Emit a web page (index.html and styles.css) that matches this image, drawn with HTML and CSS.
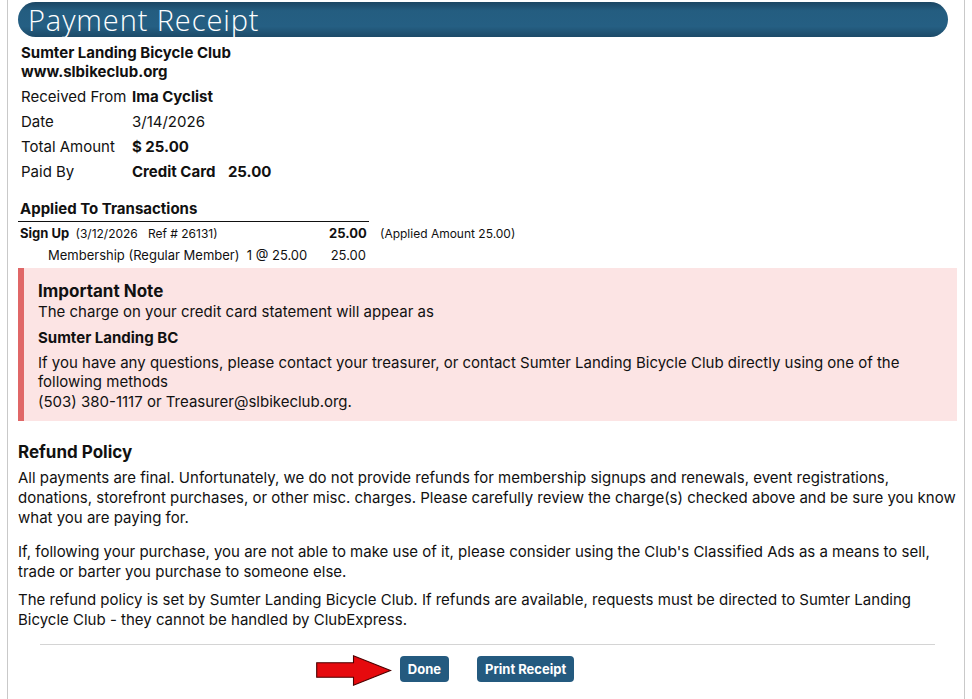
FILE: index.html
```html
<!DOCTYPE html>
<html>
<head>
<meta charset="utf-8">
<link rel="stylesheet" href="styles.css">
</head>
<body>
<div class="page">
  <div class="title-bar"><h1 class="title">Payment Receipt</h1></div>
  <div class="club">
    <div>Sumter Landing Bicycle Club</div>
    <div>www.slbikeclub.org</div>
  </div>
  <table class="info">
    <tr><td class="lbl">Received From</td><td class="b">Ima Cyclist</td></tr>
    <tr><td class="lbl">Date</td><td>3/14/2026</td></tr>
    <tr><td class="lbl">Total Amount</td><td class="b">$ 25.00</td></tr>
    <tr><td class="lbl">Paid By</td><td class="b">Credit Card <span class="amt">25.00</span></td></tr>
  </table>
  <div class="applied">
    <div class="applied-head">Applied To Transactions</div>
    <div class="trx-row">
      <div class="trx-main"><b>Sign Up</b> <span class="trx-meta">(3/12/2026 &nbsp;&nbsp;Ref # 26131)</span></div>
      <div class="trx-amt b">25.00</div>
      <div class="trx-note">(Applied Amount 25.00)</div>
    </div>
    <div class="trx-row sub">
      <div class="trx-main">Membership (Regular Member) &nbsp;1 @ 25.00</div>
      <div class="trx-amt">25.00</div>
    </div>
  </div>
  <div class="note">
    <div class="note-title">Important Note</div>
    <div class="note-line">The charge on your credit card statement will appear as</div>
    <div class="note-name">Sumter Landing BC</div>
    <div class="note-text">If you have any questions, please contact your treasurer, or contact Sumter Landing Bicycle Club directly using one of the following methods<br>(503) 380-1117 or Treasurer@slbikeclub.org.</div>
  </div>
  <div class="refund">
    <h2 class="refund-title">Refund Policy</h2>
    <p class="p1">All payments are final. Unfortunately, we do not provide refunds for membership signups and renewals, event registrations, donations, storefront purchases, or other misc. charges. Please carefully review the charge(s) checked above and be sure you know what you are paying for.</p>
    <p class="p2">If, following your purchase, you are not able to make use of it, please consider using the Club's Classified Ads as a means to sell, trade or barter you purchase to someone else.</p>
    <p class="p3">The refund policy is set by Sumter Landing Bicycle Club. If refunds are available, requests must be directed to Sumter Landing Bicycle Club - they cannot be handled by ClubExpress.</p>
  </div>
  <div class="divider"></div>
  <div class="actions">
    <span class="done-wrap">
      <svg class="arrow" width="76" height="31" viewBox="0 0 76 31"><path d="M0.7 7.7 H37.5 V0.8 L74.5 15.5 L37.5 30.2 V22.3 H0.7 Z" fill="#e60a0e" stroke="#4a0000" stroke-width="1.1" stroke-linejoin="miter"/></svg>
      <button class="btn">Done</button>
    </span>
    <button class="btn">Print Receipt</button>
  </div>
</div>
</body>
</html>
```

FILE: styles.css
```css
html, body {
  margin: 0;
  padding: 0;
  background: #fff;
}
body {
  font-family: Inter, "Liberation Sans", sans-serif;
  color: #111;
}
.page {
  margin-left: 7px;
  width: 958px;
  min-height: 699px;
  box-sizing: border-box;
  border-left: 1px solid #c9c9c9;
  border-right: 1px solid #c9c9c9;
  padding: 2px 8px 0 10px;
}
.title-bar {
  height: 35px;
  margin-right: 8px;
  border-radius: 18px;
  background: linear-gradient(to bottom, #1b4663 0%, #245d80 25%, #255f83 70%, #1c4a68 100%);
  display: flex;
  align-items: center;
  padding-left: 10px;
}
.title {
  margin: 0;
  font-family: "Open Sans", Lato, sans-serif;
  font-weight: 300;
  font-size: 29px;
  letter-spacing: 0.9px;
  color: #fff;
  line-height: 35px;
}
.club {
  padding: 6px 0 0 3px;
  font-weight: 700;
  font-size: 15px;
  line-height: 19px;
}
.info {
  border-collapse: collapse;
  margin: 3px 0 0 1px;
  font-size: 15px;
}
.info td {
  padding: 0 2px;
  height: 25px;
  vertical-align: middle;
}
.info td.lbl {
  width: 107px;
  white-space: nowrap;
}
.b { font-weight: 700; }
.amt { margin-left: 9px; }
.applied {
  margin-top: 15px;
}
.applied-head {
  width: 351px;
  font-size: 15px;
  font-weight: 700;
  line-height: 20px;
  padding-left: 2px;
  padding-bottom: 2px;
  box-sizing: border-box;
  border-bottom: 1px solid #111;
}
.trx-row {
  display: flex;
  align-items: center;
  font-size: 12px;
  height: 22px;
}
.trx-row .trx-main {
  width: 309px;
  padding-left: 2px;
}
.trx-row b { font-size: 13px; }
.trx-meta { margin-left: 3px; }
.trx-amt {
  width: 37px;
  text-align: right;
  font-size: 13px;
}
.trx-note {
  margin-left: 14px;
  font-size: 12px;
}
.trx-row.sub { font-size: 13px; }
.trx-row.sub .trx-main {
  padding-left: 30px;
  width: 281px;
}
.note {
  margin-top: 2px;
  width: 939px;
  box-sizing: border-box;
  background: #fce4e4;
  border-left: 6px solid #e06767;
  padding: 12px 14px 10px 14px;
  font-size: 15px;
  line-height: 19.5px;
}
.note-title {
  font-size: 17px;
  font-weight: 700;
  line-height: 22px;
}
.note-name {
  font-weight: 700;
  font-size: 15px;
  line-height: 20px;
  margin: 6px 0 5px;
}
.refund {
  margin-top: 20px;
  font-size: 15px;
  line-height: 20px;
}
.refund-title {
  margin: 0 0 5px;
  font-size: 17px;
  font-weight: 700;
  line-height: 22px;
}
.refund p { margin: 0; }
.refund .p1 { margin-bottom: 14px; }
.refund .p2 { margin-bottom: 8px; }
.divider {
  margin: 14px 22px 0 22px;
  border-top: 1px solid #d4d4d4;
  width: 895px;
}
.actions {
  display: flex;
  align-items: center;
  justify-content: center;
  gap: 28px;
  margin-top: 11px;
}
.done-wrap {
  position: relative;
  display: inline-flex;
}
.arrow {
  position: absolute;
  right: calc(100% + 8px);
  top: -1px;
}
.btn {
  font-family: Inter, "Liberation Sans", sans-serif;
  background: #245a7f;
  color: #fff;
  border: none;
  border-radius: 4px;
  font-weight: 700;
  font-size: 13px;
  height: 26px;
  padding: 0 8px;
}
```
